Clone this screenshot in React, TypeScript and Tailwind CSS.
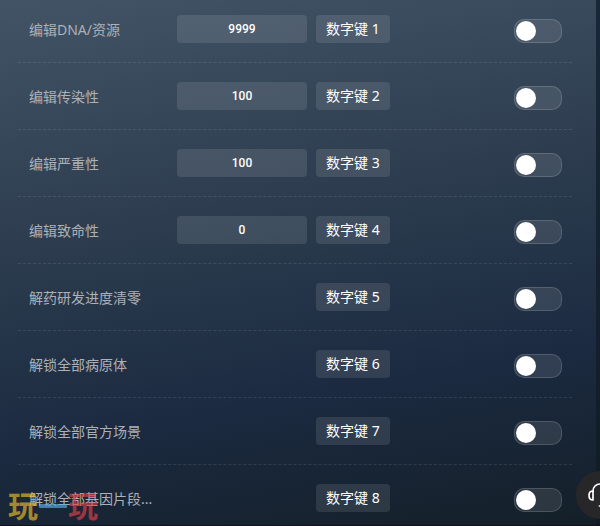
import React, { useState } from 'react';

interface TrainerOption {
  id: string;
  label: string;
  hotkey: string;
  value?: string;
}

const options: TrainerOption[] = [
  { id: 'dna', label: '编辑DNA/资源', hotkey: '数字键 1', value: '9999' },
  { id: 'infectivity', label: '编辑传染性', hotkey: '数字键 2', value: '100' },
  { id: 'severity', label: '编辑严重性', hotkey: '数字键 3', value: '100' },
  { id: 'lethality', label: '编辑致命性', hotkey: '数字键 4', value: '0' },
  { id: 'cure', label: '解药研发进度清零', hotkey: '数字键 5' },
  { id: 'pathogens', label: '解锁全部病原体', hotkey: '数字键 6' },
  { id: 'scenarios', label: '解锁全部官方场景', hotkey: '数字键 7' },
  { id: 'genes', label: '解锁全部基因片段...', hotkey: '数字键 8' },
];

const OptionRow: React.FC<{ option: TrainerOption }> = ({ option }) => {
  const [value, setValue] = useState(option.value ?? '');
  const [enabled, setEnabled] = useState(false);

  return (
    <li className="flex items-end border-b border-dashed border-white/10 pt-[19px] pr-[10px] pb-[19px] pl-[11px] last:border-b-0 last:pb-[13px]">
      <label htmlFor={option.id} className="w-[148px] shrink-0 truncate text-sm leading-[26px] text-[#adb1b6]">
        {option.label}
      </label>
      <div className="mr-[9px] w-[130px] shrink-0">
        {option.value !== undefined && (
          <input
            type="text"
            aria-label={option.label}
            value={value}
            onChange={(e) => setValue(e.target.value)}
            className="block h-7 w-full rounded bg-white/10 text-center font-['Roboto',sans-serif] text-xs font-medium text-white outline-none"
          />
        )}
      </div>
      <button type="button" className="h-7 shrink-0 rounded bg-white/10 px-[10px] text-sm text-white">
        {option.hotkey}
      </button>
      <input
        id={option.id}
        type="checkbox"
        role="switch"
        checked={enabled}
        onChange={(e) => setEnabled(e.target.checked)}
        className="ml-auto flex h-6 w-12 shrink-0 appearance-none items-center rounded-[10px] border border-white/15 bg-white/10 px-px before:size-5 before:rounded-full before:bg-white checked:justify-end checked:bg-sky-500"
      />
    </li>
  );
};

const App: React.FC = () => {
  return (
    <div className="relative overflow-hidden bg-[linear-gradient(180deg,#182838,#121b24)] pr-1 font-['Noto_Sans','Noto_Sans_CJK_SC',sans-serif]">
      <main className="bg-[linear-gradient(170deg,#435467_0%,#2d3d4f_40%,#1b2a40_72%,#141f28_100%)] pr-6 pl-[18px]">
        <ul className="-mt-1">
          {options.map((option) => (
            <OptionRow key={option.id} option={option} />
          ))}
        </ul>
      </main>
      <div className="-mr-1 h-px bg-[#14101c]" />

      {/* Watermark */}
      <div className="pointer-events-none absolute bottom-0 left-2 flex font-['Noto_Sans_CJK_SC',sans-serif] text-[30px] leading-[44px] font-bold opacity-65">
        <span className="text-[#edbd28]">玩</span>
        <span className="text-[#5eaee5]">一</span>
        <span className="text-[#e44048]">玩</span>
      </div>

      {/* Support */}
      <button
        type="button"
        aria-label="客服"
        className="absolute -right-6 bottom-[7px] flex size-12 items-center justify-center rounded-full bg-[#272628] text-white"
      >
        <svg viewBox="0 0 24 24" className="size-6" fill="none" stroke="currentColor" strokeWidth="1.700" strokeLinecap="round" strokeLinejoin="round">
          <path d="M5 8.200C5 4 8 1 12 1s7 3 7 7.200" />
          <path d="M5 8C2.300 8 1 10 1 12.500S2.300 17 5 17zM19 8c2.700 0 4 2 4 4.500S21.700 17 19 17z" />
          <path d="M19 17c0 3.500-3 6-7.500 6" />
        </svg>
      </button>
    </div>
  );
};

export default App;
